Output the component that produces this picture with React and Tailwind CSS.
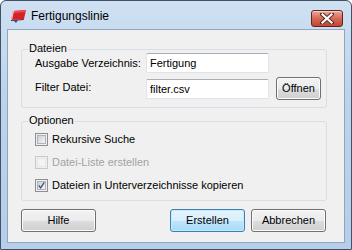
import React from 'react';

const font = { fontFamily: '"Liberation Sans", Arial, sans-serif' };

const AppIcon = () => (
    <svg width="16" height="13" viewBox="0 0 16 13" className="shrink-0">
        <polygon points="3,1 16,0 14,9 1,10" fill="#d9202a" />
        <polygon points="3,1 16,0 15.5,2 3,3" fill="#ef4a4f" />
        <polygon points="1,10 3,1 4,1 2,10" fill="#f7d6d6" />
        <polygon points="1,10 14,9 13.5,10 1,11" fill="#8d1015" />
        <polygon points="3,10 8,10 6,13" fill="#1f4fa8" />
    </svg>
);

const CloseButton = () => (
    <div className="w-[32px] h-[17px] rounded-[3px] border border-[#6b2119] bg-gradient-to-b from-[#e9a99b] via-[#d46a55] to-[#c2452f] flex items-center justify-center shadow-[inset_0_1px_0_rgba(255,255,255,0.5)]">
        <svg width="14" height="11" viewBox="0 0 14 11">
            <path d="M2 1 L12 10 M12 1 L2 10" stroke="#5a2a24" strokeWidth="4" strokeLinecap="square" />
            <path d="M2.5 1.5 L11.5 9.5 M11.5 1.5 L2.5 9.5" stroke="#ffffff" strokeWidth="2.2" strokeLinecap="square" />
        </svg>
    </div>
);

const Button = ({ children, primary, className = '' }) => (
    <div
        className={`h-[23px] rounded-[3px] border flex items-center justify-center text-[11px] text-black ${primary
            ? 'border-[#3c7fb1] bg-[linear-gradient(#e5f4fc_0%,#d9effc_50%,#bde6fd_51%,#a9daf5_100%)] shadow-[inset_0_0_0_1px_#c5ecfd]'
            : 'border-[#707070] bg-[linear-gradient(#f2f2f2_0%,#ebebeb_50%,#dddddd_51%,#cfcfcf_100%)] shadow-[inset_0_0_0_1px_#fcfcfc]'
            } ${className}`}
    >
        {children}
    </div>
);

const TextInput = ({ value }) => (
    <div className="w-[123px] h-[20px] bg-white border border-[#e2e3ea] border-t-[#abadb3] rounded-[2px] flex items-center px-[3px] text-[11px] text-black">
        {value}
    </div>
);

const Checkbox = ({ checked, disabled, label }) => (
    <div className="h-[23px] flex items-center gap-[4px]">
        <div className={`w-[13px] h-[13px] border p-[1px] ${disabled ? 'border-[#c8c8c8]' : 'border-[#8e8f8f]'}`}>
            <div className={`w-full h-full border flex items-center justify-center ${disabled
                ? 'border-[#e6e6e6] bg-[#f4f4f4]'
                : 'border-[#aeb3b9] bg-gradient-to-br from-[#cbcfd5] to-[#f6f6f6]'
                }`}>
                {checked && (
                    <svg width="9" height="9" viewBox="0 0 9 9">
                        <path d="M1 4.5 L3.5 7.5 L8 0.5" stroke="#3d4f8a" strokeWidth="1.6" fill="none" />
                    </svg>
                )}
            </div>
        </div>
        <span className={`text-[11px] leading-[13px] ${disabled ? 'text-[#a3a3a3]' : 'text-black'}`}>{label}</span>
    </div>
);

const GroupBox = ({ title, className = '', children }) => (
    <div className={`ml-[13px] w-[306px] border border-[#d5dfe5] rounded-[3px] ${className}`}>
        <span className="block w-fit -mt-[8px] ml-[6px] px-[1px] bg-[#f0f0f0] text-[11px] leading-[13px] text-black">
            {title}
        </span>
        {children}
    </div>
);

const App = () => {
    return (
        <div style={font} className="w-[352px] h-[250px] overflow-hidden bg-white">
            <div className="w-full h-full rounded-t-[6px] border border-[#3f5266] bg-[linear-gradient(#cfe0f2,#bcd3ec_40%,#b6cee9)] flex flex-col">
                {/* Title bar */}
                <div className="h-[28px] flex items-start pl-[9px] pr-[8px]">
                    <div className="mt-[9px]"><AppIcon /></div>
                    <span className="mt-[7px] ml-[5px] text-[12px] leading-[16px] text-black">
                        Fertigungslinie
                    </span>
                    <div className="ml-auto mt-[9px]"><CloseButton /></div>
                </div>

                {/* Client area */}
                <div className="ml-[6px] w-[338px] h-[214px] border border-[#8fa7c0] bg-[#f0f0f0] flex flex-col">
                    <GroupBox title="Dateien" className="mt-[19px] h-[59px]">
                        <div className="mt-[-2px] pl-[13px] flex items-center h-[20px]">
                            <span className="w-[111px] text-[11px] text-black">Ausgabe Verzeichnis:</span>
                            <TextInput value="Fertigung" />
                        </div>
                        <div className="mt-[4px] pl-[13px] flex items-start h-[22px]">
                            <span className="w-[111px] mt-[4px] text-[11px] leading-[13px] text-black">Filter Datei:</span>
                            <div className="mt-[2px]"><TextInput value="filter.csv" /></div>
                            <Button className="ml-[7px] w-[45px] h-[21px]">Öffnen</Button>
                        </div>
                    </GroupBox>

                    <GroupBox title="Optionen" className="mt-[13px] h-[80px]">
                        <div className="pl-[13px] mt-[1px] flex flex-col">
                            <Checkbox label="Rekursive Suche" />
                            <Checkbox label="Datei-Liste erstellen" disabled />
                            <Checkbox label="Dateien in Unterverzeichnisse kopieren" checked />
                        </div>
                    </GroupBox>

                    <div className="mt-[8px] ml-[13px] w-[305px] flex">
                        <Button className="w-[75px]">Hilfe</Button>
                        <Button primary className="ml-auto w-[75px]">Erstellen</Button>
                        <Button className="ml-[6px] w-[75px]">Abbrechen</Button>
                    </div>
                </div>
            </div>
        </div>
    );
};

export default App;
